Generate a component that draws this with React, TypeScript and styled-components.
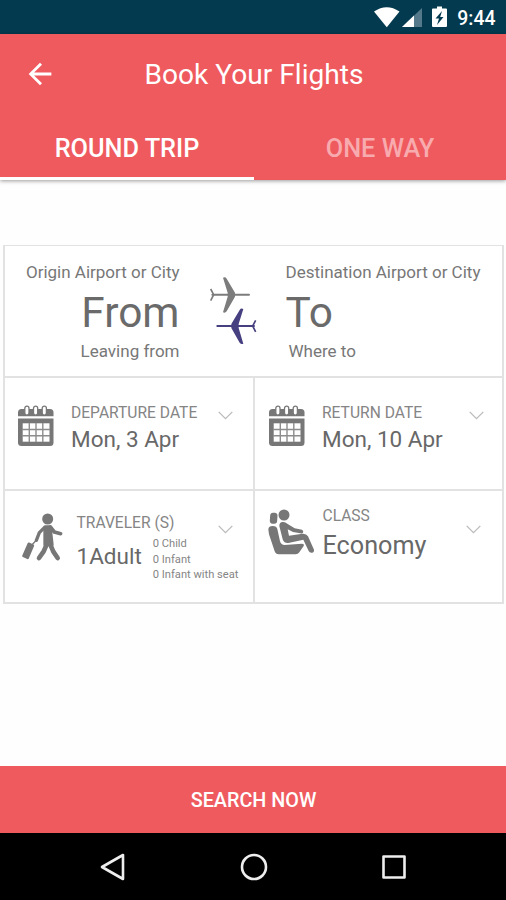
import React from "react";
import styled, { createGlobalStyle, css } from "styled-components";

const CORAL = "#ef5a5f";
const LINE = "#e2e2e2";
const ICON = "#777";

const GlobalStyle = createGlobalStyle`
  *, *::before, *::after { box-sizing: border-box; }
  body {
    margin: 0;
    background: #fefefe;
    font-family: Roboto, "Liberation Sans", sans-serif;
  }
  button { font: inherit; border: 0; padding: 0; background: none; }
  svg { display: block; flex: none; }
`;

const Screen = styled.div`
  display: flex;
  flex-direction: column;
  width: 506px;
  height: 900px;
  overflow: hidden;
`;

const StatusBar = styled.div`
  display: flex;
  align-items: center;
  justify-content: flex-end;
  flex: none;
  height: 34px;
  padding-right: 10.5px;
  background: #033a4f;
  color: #fff;
`;

const Clock = styled.span`
  margin-left: 9px;
  padding-top: 3px;
  font-size: 19.4px;
  line-height: 30px;
  font-weight: 500;
`;

const Header = styled.header`
  display: flex;
  flex-direction: column;
  flex: none;
  height: 146px;
  background: ${CORAL};
  color: #fff;
  box-shadow: 0 1px 4px rgba(0, 0, 0, 0.4);
`;

const TitleBar = styled.div`
  display: grid;
  grid-template-columns: 80px 1fr 78px;
  align-items: center;
  height: 81px;
`;

const BackButton = styled.button`
  width: 34px;
  margin: -2px 0 0 23px;
  color: #fff;
`;

const Title = styled.h1`
  margin: 0;
  font-size: 28.1px;
  line-height: 40px;
  font-weight: 400;
  text-align: center;
  white-space: nowrap;
`;

const Tabs = styled.nav`
  display: grid;
  grid-template-columns: 254px 1fr;
  flex: 1;
`;

const Tab = styled.button<{ $active?: boolean }>`
  display: flex;
  justify-content: center;
  align-items: flex-start;
  padding-top: 19px;
  font-size: 25.3px;
  line-height: 30px;
  font-weight: 500;
  color: ${(p) => (p.$active ? "#fff" : "#f8abae")};
  border-bottom: 3px solid ${(p) => (p.$active ? "#fff" : "transparent")};
`;

const Main = styled.main`
  flex: 1;
  padding: 65px 2px 0 3px;
`;

const Card = styled.section`
  border: solid ${LINE};
  border-width: 1px 2px 2px;
  background: #fff;
`;

const Route = styled.div`
  display: grid;
  grid-template-columns: 174.5px 1fr 216.5px;
  height: 130px;
  padding-top: 16px;
`;

const Place = styled.div<{ $end?: boolean }>`
  display: flex;
  flex-direction: column;
  align-items: ${(p) => (p.$end ? "flex-end" : "flex-start")};
  white-space: nowrap;
`;

const PlaceHint = styled.span<{ $inset?: boolean }>`
  font-size: 17px;
  line-height: 20px;
  color: #777;
  ${(p) =>
    p.$inset &&
    css`
      padding-left: 3px;
    `}
`;

const PlaceName = styled.strong`
  margin: 6px 0 3px;
  font-size: 42.4px;
  line-height: 50px;
  font-weight: 400;
  color: #6a6a6a;
`;

const SwapIcon = styled.div`
  padding: 14px 0 0 29px;
`;

const Options = styled.div`
  display: grid;
  grid-template-columns: 250px 1fr;
  grid-template-rows: 113px 113px;
`;

const Option = styled.div<{ $last?: boolean; $icon: number; $pad: number }>`
  display: grid;
  grid-template-columns: ${(p) => p.$icon}px 1fr auto;
  align-items: start;
  padding-right: ${(p) => p.$pad}px;
  border-top: 2px solid ${LINE};
  border-right: ${(p) => (p.$last ? "0" : `2px solid ${LINE}`)};
  white-space: nowrap;
`;

const OptionIcon = styled.div<{ $x: number; $y: number }>`
  padding: ${(p) => p.$y}px 0 0 ${(p) => p.$x}px;
`;

const OptionText = styled.div<{ $y: number }>`
  padding-top: ${(p) => p.$y}px;
  width: 0;
`;

const OptionLabel = styled.div`
  font-size: 15.6px;
  line-height: 20px;
  color: #858585;
`;

const OptionValue = styled.div<{ $large?: boolean }>`
  margin-top: ${(p) => (p.$large ? 5 : 2)}px;
  font-size: ${(p) => (p.$large ? 25.2 : 22.5)}px;
  line-height: ${(p) => (p.$large ? 30 : 28)}px;
  color: #686868;
`;

const Travelers = styled.div`
  display: flex;
  align-items: flex-start;
  gap: 11px;
  padding-top: 3px;

  ${OptionValue} {
    margin-top: 6px;
  }
`;

const Extras = styled.ul`
  margin: 0;
  padding: 0;
  list-style: none;
  font-size: 11.15px;
  line-height: 15.6px;
  color: #858585;
`;

const Chevron = styled.div<{ $y: number }>`
  padding-top: ${(p) => p.$y}px;
`;

const SearchButton = styled.button`
  flex: none;
  height: 67px;
  padding: 1px 0 0 1px;
  background: ${CORAL};
  color: #fff;
  font-size: 19.8px;
  font-weight: 500;
`;

const NavBar = styled.div`
  display: grid;
  grid-template-columns: repeat(3, 28px);
  justify-content: center;
  align-items: center;
  column-gap: 112.5px;
  flex: none;
  height: 67px;
  padding-left: 1px;
  background: #000;
`;

const StatusIcons = () => (
  <svg width="75" height="24" viewBox="373 5 75 24">
    <path d="M374 11.500Q386.800 3 399.500 11.500L386.800 27.200Z" fill="#fff" />
    <path d="M422 8V27H402Z" fill="#54798a" />
    <path d="M414 15.500V27H402Z" fill="#fff" />
    <path d="M437 6.500h5v2h4a1 1 0 0 1 1 1v16.500a1 1 0 0 1-1 1h-13a1 1 0 0 1-1-1V9.500a1 1 0 0 1 1-1h4Z" fill="#fff" />
    <path d="M442 11L435.500 18.500h3.500l-2 6.500 6.500-8h-3.300Z" fill="#033a4f" />
  </svg>
);

const BackIcon = () => (
  <svg width="34" height="34" viewBox="0 0 24 24" fill="currentColor">
    <path d="M20 11H7.830l5.590-5.590L12 4l-8 8 8 8 1.410-1.410L7.830 13H20v-2z" />
  </svg>
);

const Plane = () => (
  <>
    <path d="M9 56H119" strokeWidth="6" strokeLinecap="round" />
    <path d="M4 39L13 56L4 74" strokeWidth="5" fill="none" />
    <path d="M41 5Q48 1 52 8L77 50V62L52 106Q47 113 41 109L55 62V50Z" stroke="none" />
  </>
);

const PlanesIcon = () => (
  <svg width="48" height="69.300" viewBox="56 48 144 208">
    <g transform="translate(57 48)" fill="#7c7c7c" stroke="#7c7c7c">
      <Plane />
    </g>
    <g transform="translate(200 142) scale(-1 1)" fill="#464080" stroke="#464080">
      <Plane />
    </g>
  </svg>
);

const CalendarIcon = () => (
  <svg width="36" height="42" viewBox="0 0 36 42">
    <path d="M0 11.300V7.500Q0 4 3.500 4H32Q35.500 4 35.500 7.500V11.300Z" fill={ICON} />
    <path d="M0 13.500H35.500V37.500Q35.500 41 32 41H3.500Q0 41 0 37.500Z" fill={ICON} />
    {[8.9, 17.6, 26.3].map((x) => (
      <rect key={x} x={x - 2.1} y="1.200" width="4.200" height="9" rx="2.100" fill="#fff" stroke={ICON} strokeWidth="1.300" />
    ))}
    <path d="M4.700 18.300H31.500V36.700H4.700Z" fill="#fff" />
    <path d="M11.300 18V37M18 18V37M24.800 18V37M4 24.500H32M4 30.700H32" stroke="#8d8d8d" strokeWidth="1.400" />
  </svg>
);

const TravelerIcon = () => (
  <svg width="42.700" height="49.300" viewBox="62 68 128 148" fill={ICON} stroke={ICON} strokeLinecap="round" strokeLinejoin="round">
    <circle cx="142" cy="86" r="16.500" stroke="none" />
    <path d="M134 110H149L155 163H134Z" strokeWidth="10" />
    <path d="M150 110L162 125L181 130" fill="none" strokeWidth="11" />
    <path d="M132 112L117 127L108 150" fill="none" strokeWidth="10" />
    <path d="M139 163L130 183L116 203" fill="none" strokeWidth="14" />
    <path d="M150 163L159 184L172 203" fill="none" strokeWidth="14" />
    <path d="M85 160L98 166L82 203L69 197Z" strokeWidth="7" />
    <path d="M97 161L108 150" fill="none" strokeWidth="4" />
  </svg>
);

const SeatIcon = () => (
  <svg width="47" height="46" viewBox="17 29 141 138" fill={ICON}>
    <rect x="23" y="40" width="22" height="33" rx="9" transform="rotate(4 33 56)" />
    <circle cx="65" cy="47" r="16.500" />
    <path d="M18 90Q19 80 31 80Q43 80 45 89L53 126Q56 137 67 137L119 133Q127 134 124 140L111 159Q107 165 100 165H49Q40 165 37 156L20 105Z" />
    <path d="M51 80Q51 68 61 68Q68 67 76 74L97 87L119 91Q125 94 122 100Q119 103 114 102L92 98L76 90L80 109L120 103Q132 102 137 111L155 151Q156 159 149 160Q142 161 139 155L123 121L78 131Q64 132 61 120Z" />
  </svg>
);

const ChevronIcon = () => (
  <svg width="15" height="9" viewBox="0 0 15 9">
    <path d="M0.700 0.900L7.500 7.700L14.300 0.900" fill="none" stroke="#bbb" strokeWidth="1.300" />
  </svg>
);

export default function App() {
  return (
    <Screen>
      <GlobalStyle />
      <StatusBar>
        <StatusIcons />
        <Clock>9:44</Clock>
      </StatusBar>
      <Header>
        <TitleBar>
          <BackButton aria-label="Back">
            <BackIcon />
          </BackButton>
          <Title>Book Your Flights</Title>
        </TitleBar>
        <Tabs>
          <Tab $active>ROUND TRIP</Tab>
          <Tab>ONE WAY</Tab>
        </Tabs>
      </Header>
      <Main>
        <Card>
          <Route>
            <Place $end>
              <PlaceHint>Origin Airport or City</PlaceHint>
              <PlaceName>From</PlaceName>
              <PlaceHint>Leaving from</PlaceHint>
            </Place>
            <SwapIcon>
              <PlanesIcon />
            </SwapIcon>
            <Place>
              <PlaceHint>Destination Airport or City</PlaceHint>
              <PlaceName>To</PlaceName>
              <PlaceHint $inset>Where to</PlaceHint>
            </Place>
          </Route>
          <Options>
            <Option $icon={66} $pad={20.5}>
              <OptionIcon $x={13} $y={27}>
                <CalendarIcon />
              </OptionIcon>
              <OptionText $y={25}>
                <OptionLabel>DEPARTURE DATE</OptionLabel>
                <OptionValue>Mon, 3 Apr</OptionValue>
              </OptionText>
              <Chevron $y={32.5}>
                <ChevronIcon />
              </Chevron>
            </Option>
            <Option $last $icon={67} $pad={18.5}>
              <OptionIcon $x={14} $y={27}>
                <CalendarIcon />
              </OptionIcon>
              <OptionText $y={25}>
                <OptionLabel>RETURN DATE</OptionLabel>
                <OptionValue>Mon, 10 Apr</OptionValue>
              </OptionText>
              <Chevron $y={32.5}>
                <ChevronIcon />
              </Chevron>
            </Option>
            <Option $icon={71.5} $pad={20.5}>
              <OptionIcon $x={15.5} $y={21.5}>
                <TravelerIcon />
              </OptionIcon>
              <OptionText $y={22}>
                <OptionLabel>TRAVELER (S)</OptionLabel>
                <Travelers>
                  <OptionValue>1Adult</OptionValue>
                  <Extras>
                    <li>0 Child</li>
                    <li>0 Infant</li>
                    <li>0 Infant with seat</li>
                  </Extras>
                </Travelers>
              </OptionText>
              <Chevron $y={33.5}>
                <ChevronIcon />
              </Chevron>
            </Option>
            <Option $last $icon={67.5} $pad={21.5}>
              <OptionIcon $x={12.5} $y={18}>
                <SeatIcon />
              </OptionIcon>
              <OptionText $y={15}>
                <OptionLabel>CLASS</OptionLabel>
                <OptionValue $large>Economy</OptionValue>
              </OptionText>
              <Chevron $y={33.5}>
                <ChevronIcon />
              </Chevron>
            </Option>
          </Options>
        </Card>
      </Main>
      <SearchButton>SEARCH NOW</SearchButton>
      <NavBar>
        <svg width="28" height="28" viewBox="0 0 28 28" fill="none" stroke="#eee" strokeWidth="2.600" strokeLinejoin="round">
          <path d="M24 2V26L3 14Z" />
        </svg>
        <svg width="28" height="28" viewBox="0 0 28 28" fill="none" stroke="#eee" strokeWidth="2.600">
          <circle cx="14" cy="14" r="12" />
        </svg>
        <svg width="28" height="28" viewBox="0 0 28 28" fill="none" stroke="#eee" strokeWidth="2.600" strokeLinejoin="round">
          <path d="M3.500 3.500H24.500V24.500H3.500Z" />
        </svg>
      </NavBar>
    </Screen>
  );
}
